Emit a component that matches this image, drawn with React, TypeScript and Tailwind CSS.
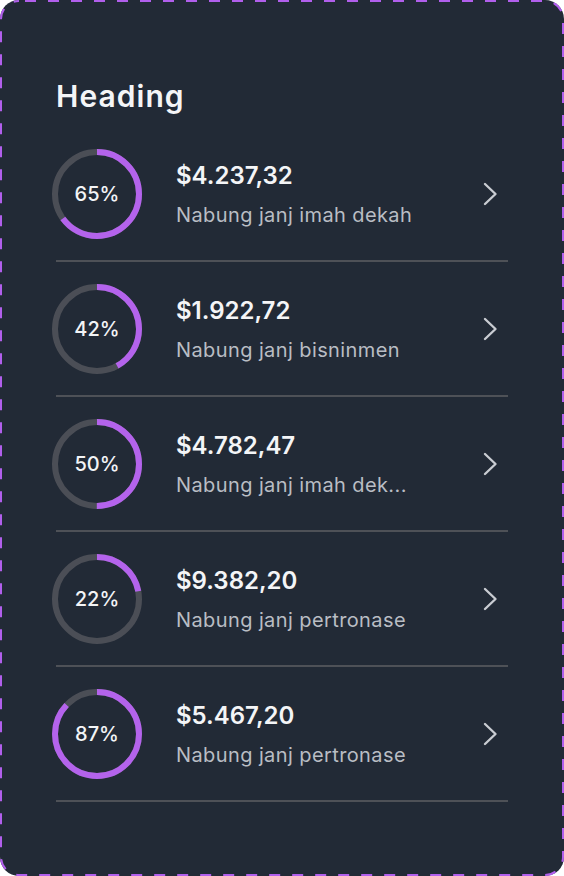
import { useMemo } from "react";

interface Goal {
  percent: number;
  amount: string;
  label: string;
}

const goals: Goal[] = [
  { percent: 65, amount: "$4.237,32", label: "Nabung janj imah dekah" },
  { percent: 42, amount: "$1.922,72", label: "Nabung janj bisninmen" },
  { percent: 50, amount: "$4.782,47", label: "Nabung janj imah dek..." },
  { percent: 22, amount: "$9.382,20", label: "Nabung janj pertronase" },
  { percent: 87, amount: "$5.467,20", label: "Nabung janj pertronase" },
];

function ProgressRing({ percent }: { percent: number }) {
  const r = 42;
  const circumference = useMemo(() => 2 * Math.PI * r, []);
  const offset = circumference * (1 - percent / 100);

  return (
    <div className="relative w-[90px] h-[90px] shrink-0 -ml-[4px]">
      <svg width={90} height={90} viewBox="0 0 90 90" className="-rotate-90">
        <circle cx={45} cy={45} r={r} fill="none" stroke="#4b4e56" strokeWidth={6} />
        <circle
          cx={45}
          cy={45}
          r={r}
          fill="none"
          stroke="#b463ec"
          strokeWidth={6}
          strokeDasharray={circumference}
          strokeDashoffset={offset}
        />
      </svg>
      <span className="absolute inset-0 flex items-center justify-center text-[20px] font-medium text-[#f3f4f6]">
        {percent}%
      </span>
    </div>
  );
}

function Chevron() {
  return (
    <svg width={15} height={24} viewBox="0 0 15 24" fill="none" className="shrink-0">
      <path
        d="M2 2 L12.5 12 L2 22"
        stroke="#c9ccd2"
        strokeWidth={2.4}
        strokeLinecap="round"
        strokeLinejoin="round"
      />
    </svg>
  );
}

// dashed frame drawn on top, css dashed borders can't set dash length
function DashedFrame() {
  return (
    <svg
      className="absolute inset-0 pointer-events-none"
      width={564}
      height={876}
      viewBox="0 0 564 876"
      fill="none"
    >
      <rect
        x={1}
        y={1}
        width={562}
        height={874}
        rx={18}
        stroke="#b15fec"
        strokeWidth={2}
        strokeDasharray="11 12"
        strokeDashoffset={-6}
      />
    </svg>
  );
}

export default function App() {
  return (
    <div className="w-[564px] h-[876px] bg-white font-['Inter','Liberation_Sans',sans-serif]">
      <div className="relative w-full h-full rounded-[19px] bg-[#222a36] px-[56px] pt-[78px]">
        <DashedFrame />
        <h1 className="text-[30px] leading-[36px] font-semibold text-[#f4f5f7] tracking-[0.035em]">
          Heading
        </h1>
        <ul className="mt-[13px]">
          {goals.map((g) => (
            <li
              key={g.amount}
              className="flex items-center pt-[22px] pb-[21px] border-b-2 border-[#4e5157]"
            >
              <ProgressRing percent={g.percent} />
              <div className="ml-[34px] flex-1 min-w-0">
                <p className="text-[24px] leading-[30px] font-semibold text-[#f4f5f7]">
                  {g.amount}
                </p>
                <p className="mt-[11px] text-[20px] leading-[26px] text-[#b9bdc4] tracking-[0.02em] whitespace-nowrap">
                  {g.label}
                </p>
              </div>
              <div className="mr-[10px]">
                <Chevron />
              </div>
            </li>
          ))}
        </ul>
      </div>
    </div>
  );
}
